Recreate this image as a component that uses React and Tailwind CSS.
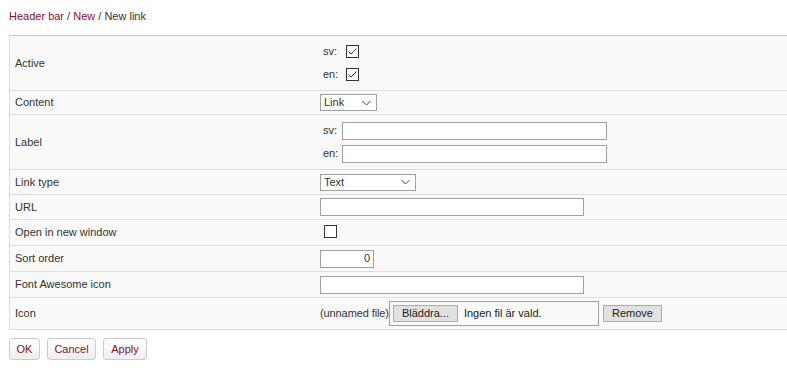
import React from "react";

const Check = ({ checked }) => (
  <span className="inline-flex w-[13px] h-[13px] border border-[#333] bg-white items-center justify-center">
    {checked && (
      <svg width="11" height="11" viewBox="0 0 11 11">
        <path d="M1.5 5.5 L4 8 L9.5 2.5" fill="none" stroke="#333" strokeWidth="1" />
      </svg>
    )}
  </span>
);

const Select = ({ value, width }) => (
  <div
    className="h-[17px] border border-[#a0a0a0] bg-white flex items-center justify-between pl-[3px] pr-[5px]"
    style={{ width }}
  >
    <span>{value}</span>
    <svg width="9" height="6" viewBox="0 0 9 6">
      <path d="M0.5 1 L4.5 5 L8.5 1" fill="none" stroke="#444" strokeWidth="1" />
    </svg>
  </div>
);

const TextInput = ({ width, value, right }) => (
  <div
    className={`h-[18px] border border-[#a0a0a0] bg-white flex items-center px-[3px] ${right ? "justify-end" : ""}`}
    style={{ width }}
  >
    {value}
  </div>
);

const Row = ({ label, h, children }) => (
  <div className={`flex border-b border-[#ddd] bg-[#f9f9f9] ${h}`}>
    <div className="w-[310px] shrink-0 flex items-center pl-[5px]">{label}</div>
    <div className="flex-1 flex flex-col justify-center">{children}</div>
  </div>
);

const LangLine = ({ lang, children, h, w }) => (
  <div className={`flex items-center ${h}`}>
    <span className={`${w} pl-[3px]`}>{lang}:</span>
    {children}
  </div>
);

export default function App() {
  return (
    <div className="w-[787px] h-[376px] bg-white text-[11px] text-[#333] font-['Liberation_Sans',Arial,sans-serif] leading-none">
      <div className="h-[35px] pl-[9px] pt-[11px]">
        <span className="text-[#8a0f2e]">Header bar</span>
        <span> / </span>
        <span className="text-[#8a0f2e]">New</span>
        <span> / New link</span>
      </div>
      <div className="ml-[9px] border-t border-l border-[#ccc] border-l-[#ddd]">
        <Row label="Active" h="h-[55px]">
          <LangLine lang="sv" h="h-[23px]" w="w-[26px]">
            <Check checked />
          </LangLine>
          <LangLine lang="en" h="h-[23px]" w="w-[26px]">
            <Check checked />
          </LangLine>
        </Row>
        <Row label="Content" h="h-[24px]">
          <Select value="Link" width="57px" />
        </Row>
        <Row label="Label" h="h-[55px]">
          <div className="flex flex-col gap-[5px]">
            <LangLine lang="sv" h="h-[18px]" w="w-[22px]">
              <TextInput width="265px" />
            </LangLine>
            <LangLine lang="en" h="h-[18px]" w="w-[22px]">
              <TextInput width="265px" />
            </LangLine>
          </div>
        </Row>
        <Row label="Link type" h="h-[25px]">
          <Select value="Text" width="96px" />
        </Row>
        <Row label="URL" h="h-[25px]">
          <TextInput width="264px" />
        </Row>
        <Row label="Open in new window" h="h-[26px]">
          <div className="pl-[4px]">
            <Check />
          </div>
        </Row>
        <Row label="Sort order" h="h-[26px]">
          <TextInput width="54px" value="0" right />
        </Row>
        <Row label="Font Awesome icon" h="h-[26px]">
          <TextInput width="264px" />
        </Row>
        <Row label="Icon" h="h-[32px]">
          <div className="flex items-center">
            <span className="tracking-[-0.1px]">(unnamed file)</span>
            <div className="w-[210px] h-[25px] border border-[#a0a0a0] flex items-center pl-[3px]">
              <div className="w-[65px] h-[17px] bg-[#e1e1e1] border border-[#adadad] flex items-center justify-center text-[#222]">
                Bläddra...
              </div>
              <span className="ml-[6px] text-[#222]">Ingen fil är vald.</span>
            </div>
            <div className="ml-[4px] w-[59px] h-[17px] bg-[#e1e1e1] border border-[#adadad] flex items-center justify-center text-[#222]">
              Remove
            </div>
          </div>
        </Row>
      </div>
      <div className="flex gap-[7px] pl-[9px] pt-[8px]">
        {[
          ["OK", "w-[31px]"],
          ["Cancel", "w-[49px]"],
          ["Apply", "w-[44px]"],
        ].map(([t, w]) => (
          <div
            key={t}
            className={`${w} h-[22px] rounded-[3px] border border-[#ccc] bg-gradient-to-b from-white to-[#eee] flex items-center justify-center text-[#8a0f2e]`}
          >
            {t}
          </div>
        ))}
      </div>
    </div>
  );
}
